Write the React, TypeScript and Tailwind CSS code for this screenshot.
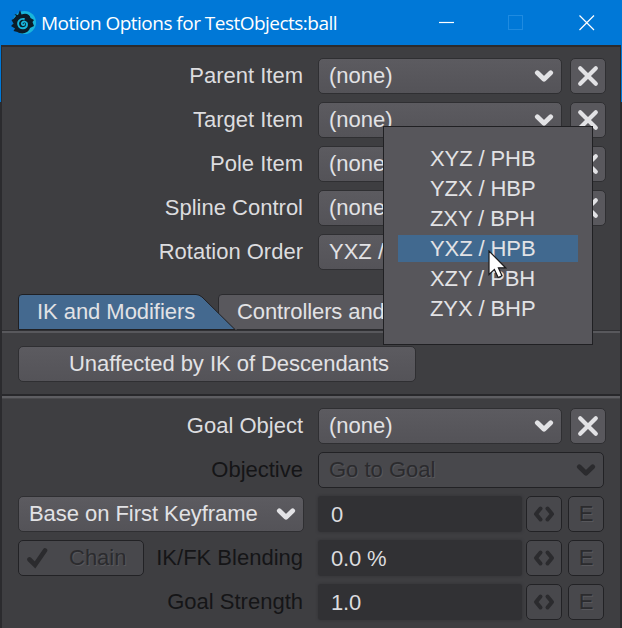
import React from "react";
import clsx from "clsx";

const ROTATION_ORDERS = ["XYZ / PHB", "YZX / HBP", "ZXY / BPH", "YXZ / HPB", "XZY / PBH", "ZYX / BHP"];

const ITEM_ROWS = ["Parent Item", "Target Item", "Pole Item", "Spline Control"];

function Chevron({ disabled = false }: { disabled?: boolean }) {
  return (
    <svg
      className={clsx("h-5 w-5 shrink-0", disabled ? "text-[#2b2b2e]" : "text-[#e2e2e5]")}
      viewBox="0 0 20 20"
      fill="none"
      stroke="currentColor"
      strokeWidth="4.8"
      strokeLinecap="round"
      strokeLinejoin="round"
    >
      <path d="M3.300 6.800 L10 13.200 L16.700 6.800" />
    </svg>
  );
}

function Label({ children, disabled = false }: { children: React.ReactNode; disabled?: boolean }) {
  return (
    <div className={clsx("flex-1 pr-[15px] text-right", disabled ? "text-[#151517]" : "text-[#dcdcdf]")}>
      {children}
    </div>
  );
}

function Select({ value, className, disabled = false }: { value: string; className?: string; disabled?: boolean }) {
  return (
    <button
      type="button"
      className={clsx(
        "flex h-9 items-center justify-between rounded-[5px] border pr-[7px] pl-2.5 text-left",
        disabled
          ? "border-[#222225] bg-[#48484c] text-[#2b2b2e] [text-shadow:1px_1px_0_#57575b]"
          : "border-[#2f2f32] bg-linear-to-b from-[#5c5b60] to-[#545358] text-[#e2e2e5]",
        className
      )}
    >
      <span>{value}</span>
      <Chevron disabled={disabled} />
    </button>
  );
}

function ClearButton() {
  return (
    <button
      type="button"
      className="ml-2 flex h-9 w-9 items-center justify-center rounded-[5px] border border-[#2f2f32] bg-[#59585d] text-[#e2e2e5]"
    >
      <svg className="h-[22px] w-[22px]" viewBox="0 0 22 22" stroke="currentColor" strokeWidth="4.2" strokeLinecap="round">
        <path d="M3.200 3.200 L18.800 18.800 M18.800 3.200 L3.200 18.800" />
      </svg>
    </button>
  );
}

function NumberField({ value }: { value: string }) {
  return (
    <div className="mr-0.5 flex">
      <div className="flex h-9 w-[204px] items-center rounded-[3px] bg-[#313134] pt-px pl-[13px] tracking-[-0.2px] text-[#dcdcdf] shadow-[0_0_2px_1px_#38383b]">
        {value}
      </div>
      <button
        type="button"
        className="ml-1 flex h-9 w-9 items-center justify-center rounded-[5px] border border-[#222225] bg-[#48484c]"
      >
        <svg className="h-5 w-6" viewBox="0 0 24 20" fill="none" stroke="#2b2b2e" strokeWidth="4" strokeLinecap="round" strokeLinejoin="round">
          <path d="M8.500 4.500 L4 10 L8.500 15.500 M15.500 4.500 L20 10 L15.500 15.500" />
        </svg>
      </button>
      <button
        type="button"
        className="ml-1.5 flex h-9 w-9 items-center justify-center rounded-[5px] border border-[#222225] bg-[#48484c] text-[#2b2b2e] [text-shadow:1px_1px_0_#57575b]"
      >
        E
      </button>
    </div>
  );
}

function TitleBar() {
  return (
    <header className="flex h-[45px] items-center bg-[#0078d7] pl-[11px] text-white">
      <svg className="h-[26px] w-[26px]" viewBox="0 0 26 26">
        <circle cx="13.5" cy="12.5" r="11.5" fill="#18b5dc" />
        <path
          d="M2.500 9 L5 6 L3.500 4 L7 5 L9 0 L10.500 4.500 C15 2.500 19 4.500 19.500 8 L23 10 L21.500 12 L23 16 L19 18 C17.500 23 11 25 6.500 22 L2.500 21 L4 18.500 L0 16 L2.500 13.500 L.5 10 Z"
          fill="#0b1c29"
        />
        <path
          d="M13.500 14 C12.500 16 10 14.800 11 12.800 C12.500 10.500 16.500 11.500 16 15 C15.500 19 9 19.500 7.500 15.500 C6 11.500 9 8.500 13 9"
          fill="none"
          stroke="#18b5dc"
          strokeWidth="1.8"
          strokeLinecap="round"
        />
      </svg>
      <h1 className="ml-1 flex-1 pt-0.5 font-['Open_Sans','Noto_Sans',sans-serif] text-[19px] tracking-[-0.52px] whitespace-nowrap">
        Motion Options for TestObjects:ball
      </h1>
      <svg className="h-[18px] w-[158px] shrink-0" viewBox="0 0 158 18" fill="none" stroke="#ffffff" strokeWidth="1.2">
        <path d="M1 8.500 H16" />
        <rect x="70.500" y="1.500" width="14" height="14" stroke="#1f8be0" strokeWidth="1" />
        <path d="M141.500 1.500 L156 16 M156 1.500 L141.500 16" />
      </svg>
      <div className="w-[26px]" />
    </header>
  );
}

function RotationMenu() {
  return (
    <div className="absolute top-[126px] left-[383px] h-[219px] w-[210px] border border-[#202023] bg-[#57565b] px-3.5 pt-[17px] text-[#e2e2e5]">
      {ROTATION_ORDERS.map((order) => (
        <div key={order} className="relative flex h-[30px] items-center">
          {order === "YXZ / HPB" && <div className="absolute inset-x-0 top-px h-[27px] bg-[#41698f]" />}
          <span className="relative pl-8 tracking-[-0.1px] whitespace-nowrap">{order}</span>
        </div>
      ))}
      <svg className="absolute top-[123px] left-[104px] h-[29px] w-[19px]" viewBox="0 0 19 29">
        <path
          d="M1 1 V24.500 L6.400 19.400 L10.200 27.500 L14 25.800 L10.400 17.800 H17.600 Z"
          fill="#ffffff"
          stroke="#19191b"
          strokeWidth="1.2"
        />
      </svg>
    </div>
  );
}

export default function App() {
  return (
    <div className="relative flex h-[628px] w-[622px] flex-col overflow-hidden bg-[#3e3e41] font-['Liberation_Sans',Arial,sans-serif] text-[22px] leading-none whitespace-nowrap">
      <TitleBar />
      <main className="flex flex-1 flex-col border-x-2 border-t-2 border-[#2b2b2e]">
        <section className="mt-[11px] flex flex-col gap-2 pr-3.5 pl-4">
          {ITEM_ROWS.map((label) => (
            <div key={label} className="flex items-center">
              <Label>{label}</Label>
              <Select value="(none)" className="w-[244px]" />
              <ClearButton />
            </div>
          ))}
          <div className="flex items-center">
            <Label>Rotation Order</Label>
            <Select value="YXZ / HPB" className="w-[244px]" />
            <div className="w-11" />
          </div>
        </section>

        <nav className="mt-6 flex h-9 pl-4">
          <svg className="h-9 w-[220px] shrink-0" viewBox="0 0 220 36">
            <path d="M200.500 36 V4 Q200.500 .5 204 .5 H220 V36 Z" fill="#59585d" stroke="#2b2b2e" />
            <path d="M.5 35.500 V4 Q.5 .5 4 .5 H178 Q181 .5 184 3 L217 35.500 Z" fill="#44698f" stroke="#202023" />
          </svg>
          <span className="-ml-[201px] flex w-[200px] items-center tracking-[-0.05px] text-[#e2e2e5]">IK and Modifiers</span>
          <span className="flex w-[299px] items-center border-y border-[#2b2b2e] bg-[#59585d] tracking-[-0.1px] text-[#e2e2e5]">
            Controllers and
          </span>
        </nav>
        <div className="h-[3px] border-t border-[#303033] bg-[#58585c]" />

        <button
          type="button"
          className="mt-[13px] ml-4 h-9 w-[398px] rounded-[5px] border border-[#2f2f32] bg-linear-to-b from-[#5c5b60] to-[#545358] pl-[50px] text-left tracking-[-0.04px] text-[#e2e2e5]"
        >
          Unaffected by IK of Descendants
        </button>
        <div className="mt-3 h-[5px] border-t-2 border-b border-t-[#28282b] border-b-[#4a4a4d] bg-[#5e5e62]" />

        <section className="mt-[9px] flex flex-col gap-2 pr-3.5 pl-4">
          <div className="flex items-center">
            <Label>Goal Object</Label>
            <Select value="(none)" className="w-[244px]" />
            <ClearButton />
          </div>
          <div className="flex items-center">
            <Label disabled>Objective</Label>
            <Select value="Go to Goal" className="mr-0.5 w-[286px]" disabled />
          </div>
          <div className="flex items-center">
            <Select value="Base on First Keyframe" className="mr-3.5 w-[286px] tracking-[-0.05px]" />
            <NumberField value="0" />
          </div>
          <div className="flex items-center">
            <div className="flex h-9 w-[126px] items-center rounded-[5px] border border-[#222225] bg-[#48484c] pl-2 text-[#2b2b2e]">
              <svg className="h-[22px] w-[22px]" viewBox="0 0 22 22" fill="none" stroke="currentColor" strokeWidth="4.6" strokeLinecap="round">
                <path d="M2.500 12.500 L8 18 L18 3.500" />
              </svg>
              <span className="ml-5 [text-shadow:1px_1px_0_#57575b]">Chain</span>
            </div>
            <Label disabled>IK/FK Blending</Label>
            <NumberField value="0.0 %" />
          </div>
          <div className="flex items-center">
            <Label disabled>Goal Strength</Label>
            <NumberField value="1.0" />
          </div>
        </section>
      </main>
      {/* Accent edge showing down both sides of the window */}
      <div className="absolute top-[45px] left-0 h-[57px] w-px bg-[#0078d7]" />
      <div className="absolute top-[45px] right-0 h-[57px] w-px bg-[#0078d7]" />
      <RotationMenu />
    </div>
  );
}
